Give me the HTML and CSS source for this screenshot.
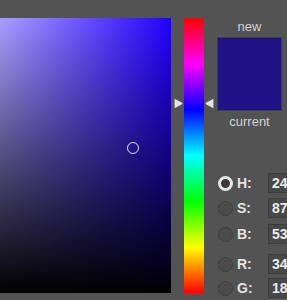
FILE: index.html
```html
<!DOCTYPE html>
<html>
<head>
<meta charset="utf-8">
<link rel="stylesheet" href="styles.css">
</head>
<body>
<div class="picker">
  <div class="field">
    <div class="marker"></div>
  </div>
  <div class="hue">
    <svg class="arrow arrow-left" width="10" height="11" viewBox="0 0 10 11"><path d="M1.6 1.3 Q1 0.5 2 1 L9 4.7 Q9.8 5.5 9 6.3 L2 10 Q1 10.5 1.6 9.7 Z" fill="#e4e4e4"/></svg>
    <div class="hue-bar"></div>
    <svg class="arrow arrow-right" width="10" height="11" viewBox="0 0 10 11"><path d="M8.4 1.3 Q9 0.5 8 1 L1 4.7 Q0.2 5.5 1 6.3 L8 10 Q9 10.5 8.4 9.7 Z" fill="#e4e4e4"/></svg>
  </div>
  <div class="panel">
    <div class="cap">new</div>
    <div class="swatch"></div>
    <div class="cap">current</div>
    <div class="fields">
      <div class="row"><span class="radio on"></span><span class="lbl">H:</span><span class="inp">24</span></div>
      <div class="row"><span class="radio"></span><span class="lbl">S:</span><span class="inp">87</span></div>
      <div class="row r-b"><span class="radio"></span><span class="lbl">B:</span><span class="inp">53</span></div>
      <div class="row r-r"><span class="radio"></span><span class="lbl">R:</span><span class="inp">34</span></div>
      <div class="row r-g"><span class="radio"></span><span class="lbl">G:</span><span class="inp">18</span></div>
    </div>
  </div>
</div>
</body>
</html>
```

FILE: styles.css
```css
html, body {
  margin: 0;
  padding: 0;
  background: #535353;
  width: 287px;
  height: 300px;
  overflow: hidden;
  font-family: "Liberation Sans", Arial, sans-serif;
}
.picker {
  display: flex;
  align-items: flex-start;
  padding-top: 18px;
}
.field {
  position: relative;
  width: 171px;
  height: 275px;
  flex: none;
  background:
    linear-gradient(to top, #000, rgba(0,0,0,0)),
    linear-gradient(to right, #fff, rgb(34,0,255));
  background-size: 275px 100%;
  background-position: right top;
  background-repeat: no-repeat;
}
.marker {
  position: absolute;
  left: 127px;
  top: 124px;
  width: 10px;
  height: 10px;
  border: 1.6px solid #e2e2ee;
  border-radius: 50%;
}
.hue {
  position: relative;
  flex: none;
  width: 46px;
  display: flex;
  justify-content: center;
}
.hue-bar {
  width: 20px;
  height: 275px;
  background: linear-gradient(to bottom, #f00 0%, #f0f 16.67%, #00f 33.33%, #0ff 50%, #0f0 66.67%, #ff0 83.33%, #f00 100%);
}
.arrow {
  position: absolute;
  top: 80px;
}
.arrow-left { left: 2px; }
.arrow-right { left: 34px; }
.panel {
  flex: none;
  width: 70px;
  display: flex;
  flex-direction: column;
}
.cap {
  width: 65px;
  text-align: center;
  font-size: 13px;
  line-height: 18px;
  color: #d2d2d2;
}
.swatch {
  width: 63px;
  height: 72px;
  margin-top: 1px;
  border: 1px solid #414141;
  background: #221287;
  margin-bottom: 2px;
}
.fields {
  display: flex;
  flex-direction: column;
  gap: 5px;
  margin-top: 42px;
}
.row {
  display: flex;
  align-items: center;
  height: 20px;
}
.r-b { margin-top: 1px; }
.r-r { margin-top: 5px; }
.r-g { margin-top: -1px; }
.radio {
  width: 13px;
  height: 13px;
  margin-left: 1px;
  border: 1px solid #3e3e3e;
  border-radius: 50%;
  background: #4c4c4c;
  flex: none;
  box-sizing: content-box;
}
.radio.on {
  width: 9px;
  height: 9px;
  border: 3px solid #e6e6e6;
  background: #383838;
}
.lbl {
  flex: none;
  width: 31px;
  margin-left: 4px;
  font-size: 14px;
  font-weight: bold;
  color: #e4e4e4;
}
.inp {
  flex: none;
  width: 30px;
  height: 18px;
  border: 1px solid #3c3c3c;
  background: #484848;
  color: #ececec;
  font-size: 14px;
  font-weight: bold;
  line-height: 18px;
  padding-left: 3px;
}
```
